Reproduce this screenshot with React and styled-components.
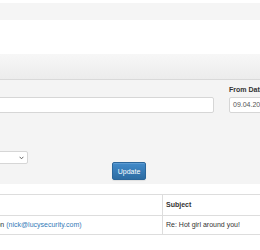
import React from 'react';
import styled, { createGlobalStyle } from 'styled-components';

const Global = createGlobalStyle`
  html, body { margin: 0; padding: 0; overflow: hidden; background: #fff; }
  body {
    font-family: "Liberation Sans", Arial, sans-serif;
    font-size: 7px;
    color: #333;
  }
`;

const Page = styled.div`
  margin-left: -80px;
  width: 440px;
  padding-top: 3px;
`;

const Breadcrumb = styled.div`
  height: 17px;
  background: #f5f5f5;
  border-radius: 2px;
`;

const Panel = styled.section`
  margin-top: 34px;
`;

const PanelHeading = styled.div`
  height: 25px;
  background: linear-gradient(#f7f7f7, #ececec);
  border-bottom: 1px solid #d9d9d9;
`;

const PanelBody = styled.div`
  background: #f4f4f4;
  padding: 5px 0 4px 20px;
`;

const FormRow = styled.div`
  display: grid;
  grid-template-columns: 274px 140px;
  column-gap: 15px;
`;

const Field = styled.div`
  display: flex;
  flex-direction: column;
`;

const Label = styled.label`
  align-self: flex-start;
  font-weight: bold;
  line-height: 10px;
  height: 10px;
  margin-bottom: 2px;
  color: #333;
  white-space: nowrap;
`;

const Input = styled.div`
  box-sizing: border-box;
  height: 16px;
  background: #fff;
  border: 1px solid #d6d6d6;
  border-radius: 2px;
  padding: 0 3px;
  line-height: 14px;
  color: #555;
  white-space: nowrap;
  overflow: hidden;
`;

const Row2 = styled.div`
  display: flex;
  align-items: flex-start;
  margin-top: 26px;
`;

const SelectBox = styled.div`
  box-sizing: border-box;
  width: 88px;
  height: 13px;
  background: #fff;
  border: 1px solid #d6d6d6;
  border-radius: 2px;
  display: flex;
  align-items: center;
  justify-content: flex-end;
  padding-right: 3px;
`;

const ButtonCol = styled.div`
  margin-left: 84px;
  padding-top: 23px;
`;

const Button = styled.button`
  box-sizing: border-box;
  width: 34px;
  height: 18px;
  padding: 0;
  font-family: inherit;
  font-size: 7px;
  color: #fff;
  background: linear-gradient(#428bca, #2d6ca2);
  border: 1px solid #2b669a;
  border-radius: 2px;
  box-shadow: inset 0 1px 0 rgba(255,255,255,0.15), 0 1px 1px rgba(0,0,0,0.08);
`;

const Table = styled.table`
  margin-top: 10px;
  margin-left: 20px;
  width: 420px;
  border-collapse: collapse;
`;

const Th = styled.th`
  text-align: left;
  font-weight: bold;
  line-height: 10px;
  padding: 5px 3px;
  border-top: 1px solid #ddd;
  border-bottom: 1px solid #ddd;
  border-left: ${p => (p.$divider ? '1px solid #ddd' : 'none')};
  width: ${p => (p.$w ? `${p.$w}px` : 'auto')};
  white-space: nowrap;
`;

const Td = styled.td`
  line-height: 10px;
  padding: 4px 3px 4px ${p => p.$pl || 3}px;
  border-bottom: 1px solid #ddd;
  border-left: ${p => (p.$divider ? '1px solid #ddd' : 'none')};
  white-space: nowrap;
`;

const Link = styled.a`
  color: #337ab7;
  text-decoration: none;
`;

const Chevron = () => (
  <svg width="5" height="4" viewBox="0 0 5 4">
    <path d="M0.6 0.8 L2.5 2.8 L4.4 0.8" fill="none" stroke="#555" strokeWidth="0.9" />
  </svg>
);

export default function App() {
  return (
    <>
      <Global />
      <Page>
        <Breadcrumb />
        <Panel>
          <PanelHeading />
          <PanelBody>
            <FormRow>
              <Field>
                <Label>Search</Label>
                <Input />
              </Field>
              <Field>
                <Label>From Date</Label>
                <Input>09.04.2018 00:00</Input>
              </Field>
            </FormRow>
            <Row2>
              <Field>
                <Label>Show</Label>
                <SelectBox>
                  <Chevron />
                </SelectBox>
              </Field>
              <ButtonCol>
                <Button>Update</Button>
              </ButtonCol>
            </Row2>
          </PanelBody>
        </Panel>
        <Table>
          <thead>
            <tr>
              <Th $w={216}>Sender</Th>
              <Th $divider>Subject</Th>
            </tr>
          </thead>
          <tbody>
            <tr>
              <Td $pl={23}>
                Nick Jackson <Link href="#">(nick@lucysecurity.com)</Link>
              </Td>
              <Td $divider>Re: Hot girl around you!</Td>
            </tr>
          </tbody>
        </Table>
      </Page>
    </>
  );
}
